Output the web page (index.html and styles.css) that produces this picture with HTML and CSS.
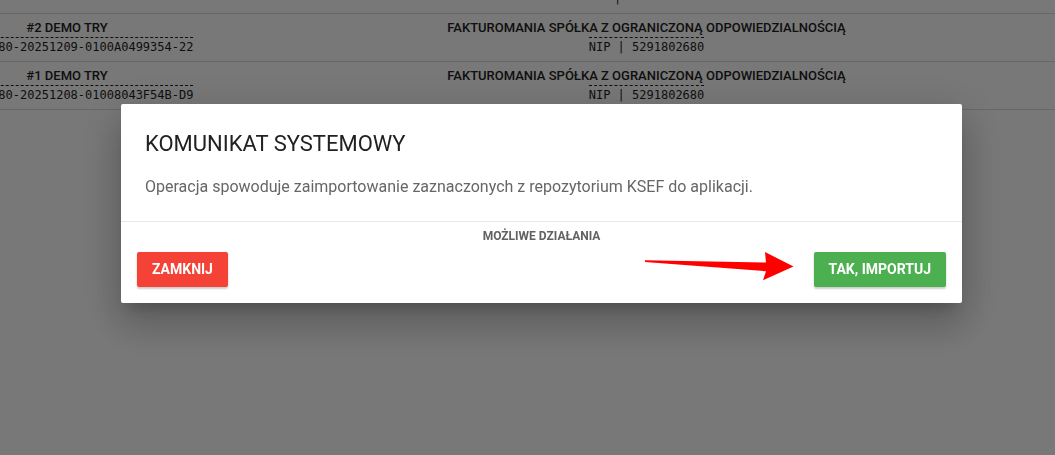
FILE: index.html
```html
<!DOCTYPE html>
<html lang="pl">
<head>
<meta charset="utf-8">
<title>Komunikat systemowy</title>
<link rel="stylesheet" href="styles.css">
</head>
<body>
<div class="table">
  <div class="row">
    <div class="cell cell-doc"></div>
    <div class="cell cell-firm"><span class="mono stub">|</span></div>
  </div>
  <div class="row">
    <div class="cell cell-doc">
      <div class="name">#2 DEMO TRY</div>
      <span class="mono dashed">5291802680-20251209-0100A0499354-22</span>
    </div>
    <div class="cell cell-firm">
      <div class="name">FAKTUROMANIA SPÓŁKA Z OGRANICZONĄ ODPOWIEDZIALNOŚCIĄ</div>
      <span class="mono dashed">NIP | 5291802680</span>
    </div>
  </div>
  <div class="row">
    <div class="cell cell-doc">
      <div class="name">#1 DEMO TRY</div>
      <span class="mono dashed">5291802680-20251208-01008043F54B-D9</span>
    </div>
    <div class="cell cell-firm">
      <div class="name">FAKTUROMANIA SPÓŁKA Z OGRANICZONĄ ODPOWIEDZIALNOŚCIĄ</div>
      <span class="mono dashed">NIP | 5291802680</span>
    </div>
  </div>
</div>

<div class="overlay"></div>

<div class="modal">
  <div class="modal-content">
    <h4 class="modal-title">KOMUNIKAT SYSTEMOWY</h4>
    <p class="modal-text">Operacja spowoduje zaimportowanie zaznaczonych z repozytorium KSEF do aplikacji.</p>
  </div>
  <div class="modal-footer">
    <div class="footer-label">MOŻLIWE DZIAŁANIA</div>
    <div class="actions">
      <button class="btn btn-red">ZAMKNIJ</button>
      <button class="btn btn-green">TAK, IMPORTUJ</button>
    </div>
  </div>
</div>

<svg class="annotation" width="1055" height="455" viewBox="0 0 1055 455">
  <polygon points="645,260.3 766,262.6 765,252 793.5,266.6 763,280.2 766,271.2 645,262.1" fill="#ff0000"/>
</svg>
</body>
</html>
```
FILE: styles.css
```css
html, body {
  margin: 0;
  padding: 0;
  width: 1055px;
  height: 455px;
  overflow: hidden;
  background: #ffffff;
  font-family: Roboto, "Liberation Sans", sans-serif;
}

.table {
  margin-top: -34px;
  margin-left: -100px;
  width: 1160px;
}

.row {
  display: flex;
  height: 47px;
  border-bottom: 1px solid #dcdcdc;
}

.cell {
  padding-top: 5px;
  text-align: center;
  box-sizing: border-box;
}

.cell-doc {
  width: 334px;
}

.cell-firm {
  width: 825px;
}

.name {
  font-size: 13px;
  line-height: 17px;
  font-weight: 500;
  color: #222;
  white-space: nowrap;
}

.mono {
  display: inline-block;
  font-family: "DejaVu Sans Mono", "Liberation Mono", monospace;
  font-size: 12px;
  line-height: 18px;
  color: #1e1e1e;
  white-space: nowrap;
}

.dashed {
  border-top: 1px dashed #222;
}

.stub {
  margin-top: 18px;
  margin-right: 58px;
}

.overlay {
  position: fixed;
  inset: 0;
  background: rgba(0, 0, 0, 0.53);
}

.modal {
  position: fixed;
  top: 104px;
  left: 121px;
  width: 841px;
  background: #fff;
  border-radius: 2px;
  box-shadow: 0 24px 38px 3px rgba(0,0,0,0.14), 0 9px 46px 8px rgba(0,0,0,0.12), 0 11px 15px -7px rgba(0,0,0,0.2);
}

.modal-content {
  padding: 24px 24px 23px;
  border-bottom: 1px solid #e8e8e8;
}

.modal-title {
  margin: 0;
  padding-top: 2px;
  font-size: 22px;
  line-height: 28px;
  font-weight: 400;
  color: #212121;
}

.modal-text {
  margin: 18px 0 0;
  font-size: 16px;
  line-height: 22px;
  color: #666;
}

.modal-footer {
  padding: 6px 16px 16px;
}

.footer-label {
  text-align: center;
  font-size: 12px;
  line-height: 16px;
  font-weight: 700;
  color: #616161;
  margin-bottom: 8px;
}

.actions {
  display: flex;
  justify-content: space-between;
}

.btn {
  border: none;
  height: 35px;
  padding: 0 15px;
  font-family: Roboto, "Liberation Sans", sans-serif;
  font-size: 14px;
  font-weight: 700;
  line-height: 35px;
  color: #fff;
  border-radius: 2px;
  box-shadow: 0 2px 2px 0 rgba(0,0,0,0.14), 0 1px 1px -2px rgba(0,0,0,0.12), 0 1px 3px 0 rgba(0,0,0,0.1);
}

.btn-red {
  background: #f44336;
}

.btn-green {
  background: #4caf50;
}

.annotation {
  position: fixed;
  top: 0;
  left: 0;
}
```
